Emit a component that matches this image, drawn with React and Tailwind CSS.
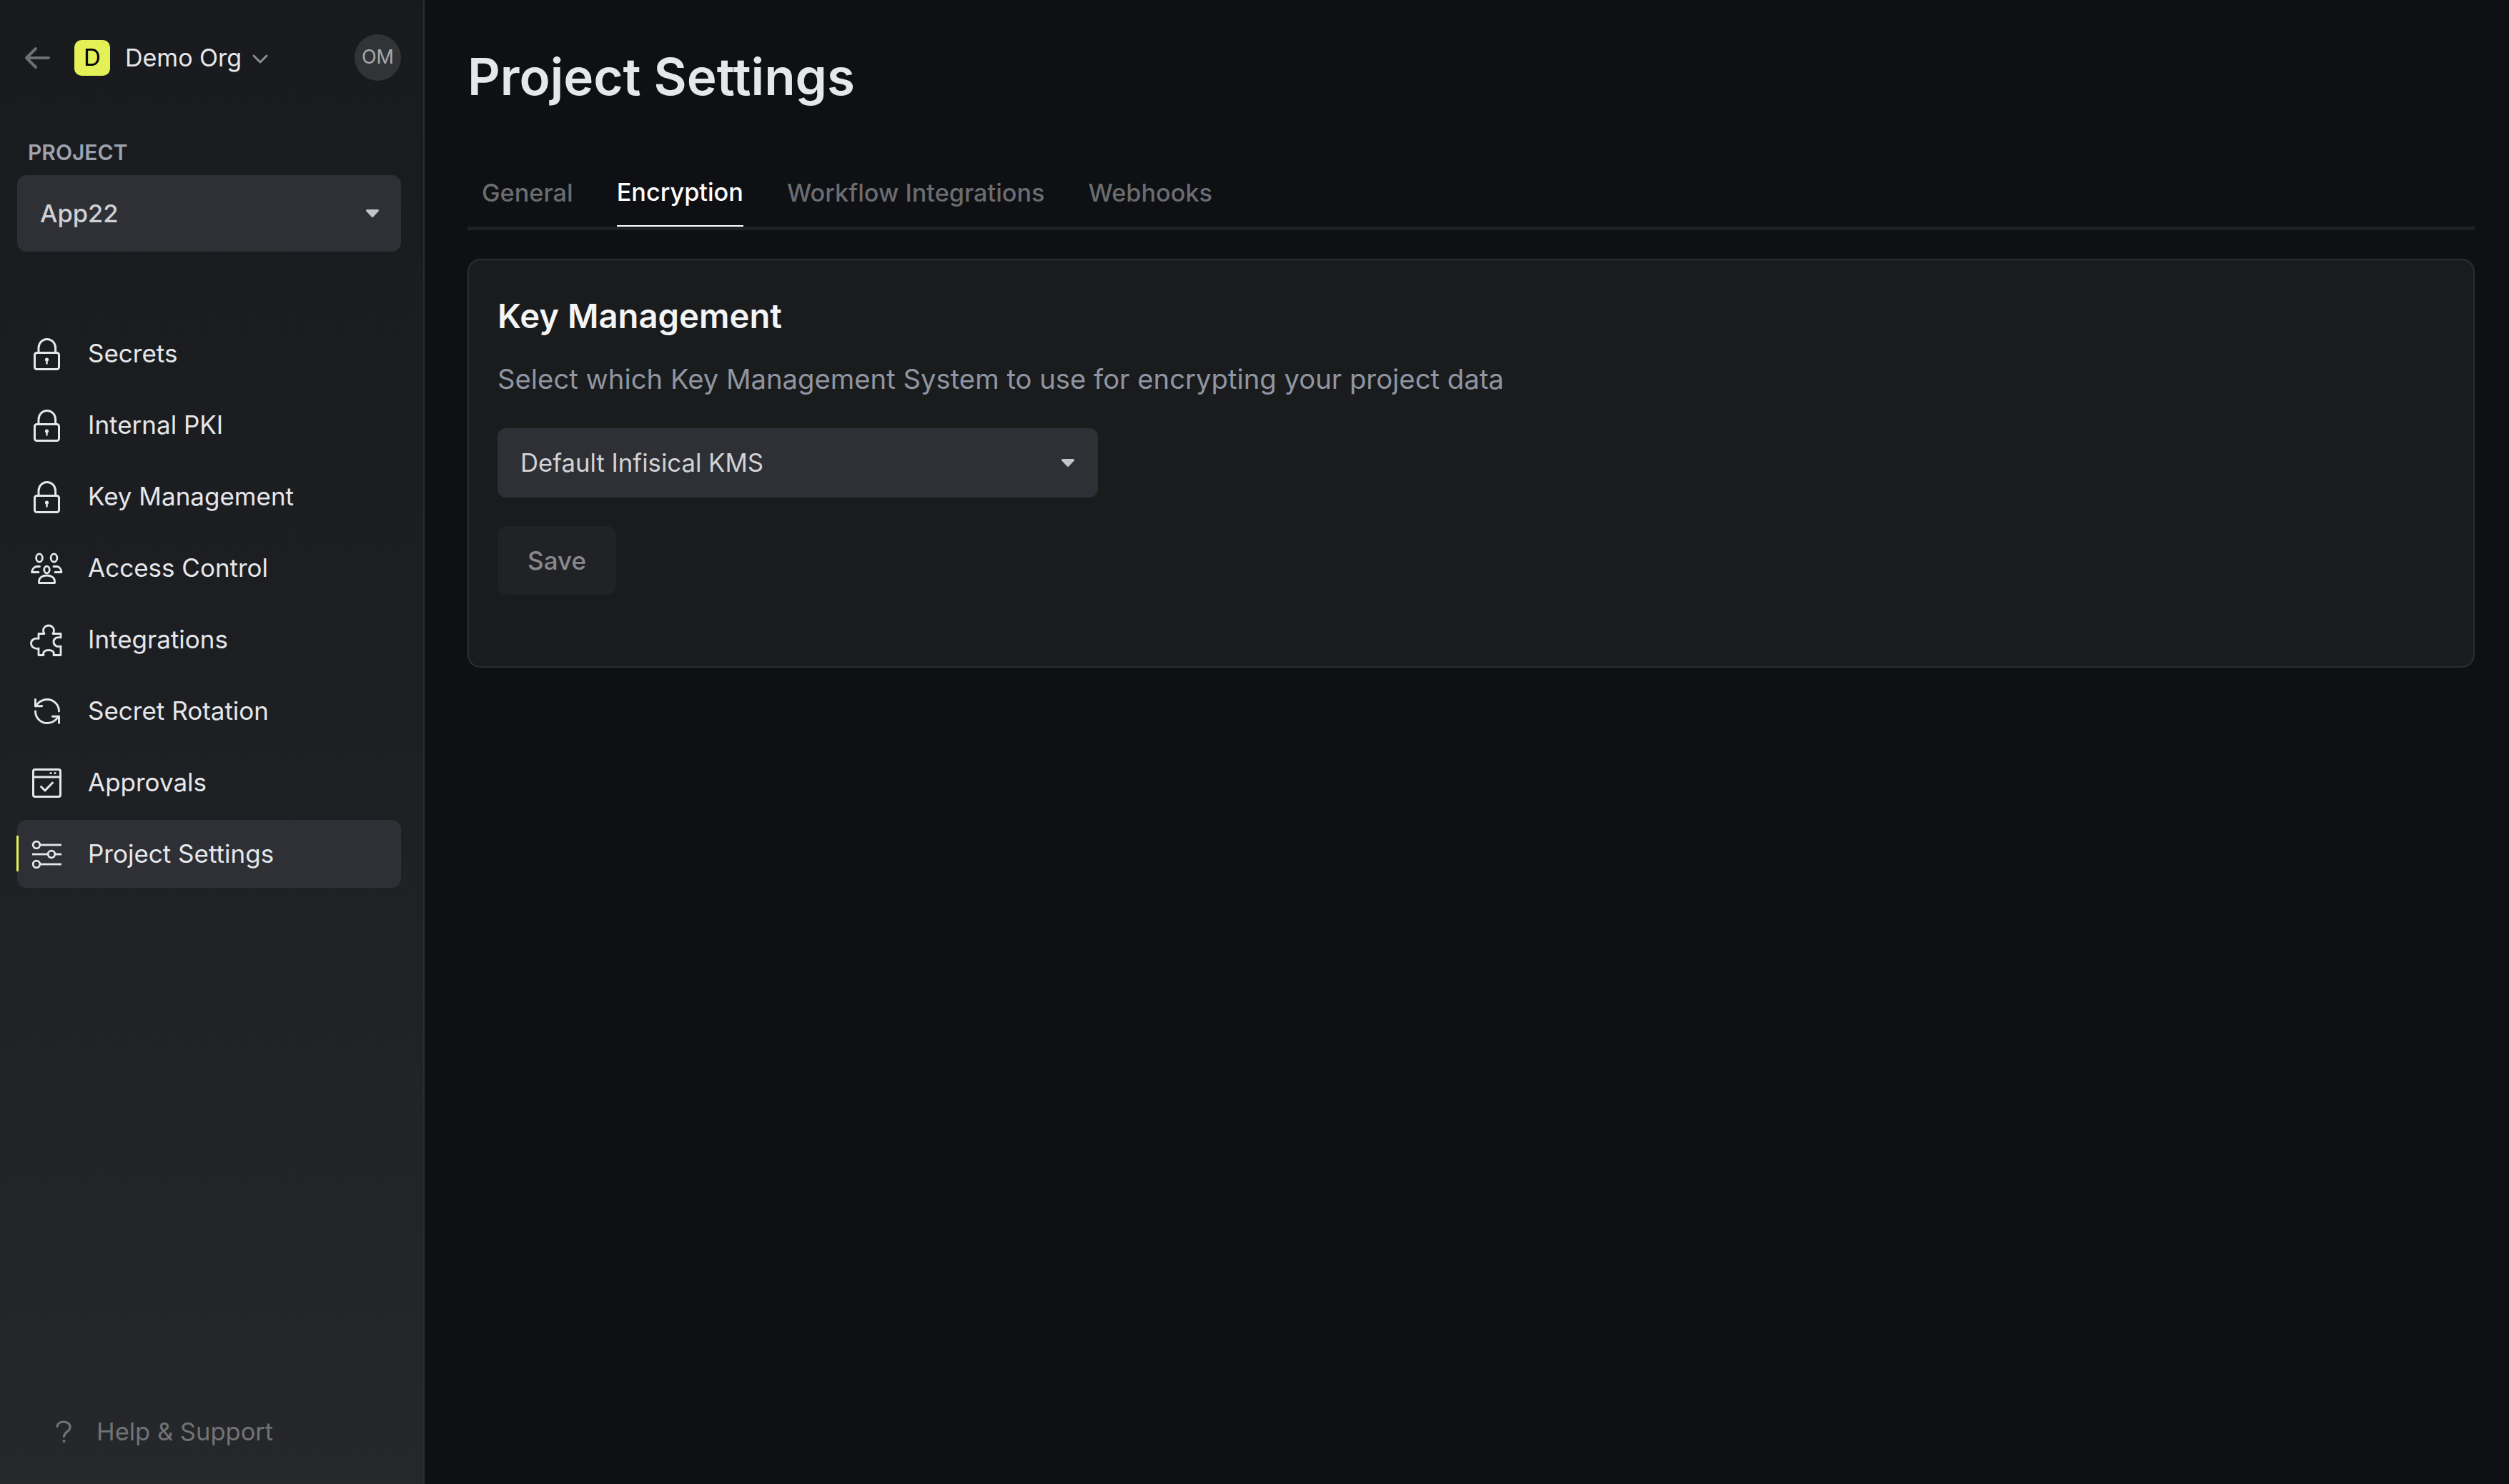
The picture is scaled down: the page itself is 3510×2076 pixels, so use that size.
import { RefreshCcw } from 'lucide-react'

function LockIcon() {
  return (
    <svg width="48" height="48" viewBox="0 0 48 48" fill="none" stroke="currentColor" strokeWidth="3">
      <path d="M12 22V15.5a11.8 12 0 0 1 23.6 0V22" />
      <rect x="6.5" y="22.5" width="34" height="23" rx="3" />
      <circle cx="23.5" cy="32" r="2.6" fill="currentColor" stroke="none" />
      <path d="M23.5 33v4.5" strokeWidth="2.4" strokeLinecap="round" />
    </svg>
  )
}

function PeopleIcon() {
  return (
    <svg width="48" height="48" viewBox="0 0 48 48" fill="none" stroke="currentColor" strokeWidth="2.8" strokeLinecap="round" strokeLinejoin="round">
      <ellipse cx="13" cy="9.5" rx="4.4" ry="5.6" />
      <ellipse cx="33.5" cy="9.5" rx="4.4" ry="5.6" />
      <ellipse cx="23.5" cy="26" rx="3.8" ry="4.8" />
      <path d="M13.5 21.5H9.5C6 21.5 3 25 2.5 29.5H12" />
      <path d="M33 21.5h4.5c3.5 0 6 3.5 6.500 8H35" />
      <path d="M12.500 44.500V42c0-4.800 5-8 11-8s11 3.200 11 8v2.500Z" />
    </svg>
  )
}

function PuzzleIcon() {
  return (
    <svg width="48" height="48" viewBox="0 0 48 48" fill="none" stroke="currentColor" strokeWidth="2.800" strokeLinejoin="round">
      <path d="M12 15.500H20C19 14 18.500 12.500 18.500 11C18.500 7 22 4 26 4C30 4 33.500 7 33.500 11C33.500 12.500 33 14 32 15.500H43V21C38 19.500 33 22 33 27C33 32 38 34.500 43 33V45.500H33C34.500 41 31 38.500 26 38.500C21 38.500 17.500 41 19 45.500H12V36C7 37.500 1.500 34 1.500 29C1.500 24 7 21 12 22.500Z" />
    </svg>
  )
}

function ApprovalIcon() {
  return (
    <svg width="48" height="48" viewBox="0 0 48 48" fill="none" stroke="currentColor" strokeWidth="3" strokeLinecap="round" strokeLinejoin="round">
      <rect x="4.500" y="5.500" width="38" height="38" rx="2.500" />
      <path d="M4.500 16H42.500" />
      <circle cx="29" cy="10.500" r="1.500" fill="currentColor" stroke="none" />
      <circle cx="35" cy="10.500" r="1.500" fill="currentColor" stroke="none" />
      <path d="M15.500 29.500l5.500 5.500 10.500-11" />
    </svg>
  )
}

function SlidersIcon() {
  return (
    <svg width="48" height="48" viewBox="0 0 48 48" fill="none" stroke="currentColor" strokeWidth="2.800">
      <circle cx="9" cy="11" r="4.800" />
      <path d="M14 11H44" />
      <path d="M3 24H25" />
      <circle cx="30" cy="24" r="4.800" />
      <path d="M35 24H44" />
      <circle cx="9" cy="38" r="4.800" />
      <path d="M14 38H44" />
    </svg>
  )
}

function Caret({ className }) {
  return (
    <svg width="20" height="13" viewBox="0 0 20 13" className={className}>
      <path d="M2.500 2.500H17.500L10 10.500Z" fill="currentColor" stroke="currentColor" strokeWidth="3" strokeLinejoin="round" />
    </svg>
  )
}

const navItems = [
  { label: 'Secrets', icon: <LockIcon /> },
  { label: 'Internal PKI', icon: <LockIcon /> },
  { label: 'Key Management', icon: <LockIcon /> },
  { label: 'Access Control', icon: <PeopleIcon /> },
  { label: 'Integrations', icon: <PuzzleIcon /> },
  { label: 'Secret Rotation', icon: <RefreshCcw size={44} strokeWidth={1.6} /> },
  { label: 'Approvals', icon: <ApprovalIcon /> },
  { label: 'Project Settings', icon: <SlidersIcon />, active: true },
]

const tabs = ['General', 'Encryption', 'Workflow Integrations', 'Webhooks']

export default function App() {
  return (
    <div className="flex h-screen w-screen overflow-hidden bg-[#0e1014] font-[family-name:Inter,sans-serif]">
      {/* sidebar */}
      <aside className="flex h-full w-[594px] shrink-0 flex-col border-r-2 border-[#2b2c30] bg-linear-to-t from-[#26272b] via-[#1e1f22] via-50% to-[#191a1d]">
        <div className="flex h-[65px] items-center justify-between mt-[48px] pl-[34px] pr-[31px]">
          <div className="flex items-center">
            <svg width="36" height="32" viewBox="0 0 36 32" fill="none" stroke="#6f7072" strokeWidth="4" strokeLinecap="round" strokeLinejoin="round">
              <path d="M34 16H3M16 3L3 16L16 29" />
            </svg>
            <div className="ml-[34px] flex h-[50px] w-[50px] items-center justify-center rounded-[10px] bg-[#e3f157] text-[33px] text-black">
              D
            </div>
            <span className="ml-[21px] text-[34px] text-[#e5e7eb]">Demo Org</span>
            <svg className="ml-[15px] mt-[4px]" width="22" height="13" viewBox="0 0 22 13" fill="none" stroke="#8c8d90" strokeWidth="3" strokeLinecap="round" strokeLinejoin="round">
              <path d="M2 2L11 11L20 2" />
            </svg>
          </div>
          <div className="flex h-[65px] w-[65px] items-center justify-center rounded-full bg-[#323337] text-[27px] text-[#a8a9ac]">
            OM
          </div>
        </div>

        <div className="ml-[39px] mt-[84px] text-[30px] leading-[32px] font-semibold text-[#9ca3af]">PROJECT</div>
        <div className="ml-[24px] mr-[31px] mt-[16px] flex h-[107px] items-center justify-between rounded-[13px] bg-[#2e3035] pl-[32px] pr-[30px]">
          <span className="text-[34.5px] font-medium text-[#cfd1d5]">App22</span>
          <Caret className="text-[#c4c5c8]" />
        </div>

        <nav className="ml-[24px] mr-[31px] mt-[95px] flex flex-col gap-[5px]">
          {navItems.map((item) => (
            <div
              key={item.label}
              className={`relative flex h-[95px] items-center rounded-[13px] pl-[18px] text-[35px] text-[#e5e7eb] ${item.active ? 'bg-[#2e3035]' : ''}`}
            >
              {item.active && <div className="absolute left-[-1px] top-[22px] h-[50px] w-[3px] bg-[#e3f157]" />}
              <span className="flex w-[48px] items-center justify-center">{item.icon}</span>
              <span className="ml-[33px]">{item.label}</span>
            </div>
          ))}
        </nav>

        <div className="mt-auto mb-[51px] ml-[78px] flex h-[44px] items-center text-[34.5px] text-[#727376]">
          <svg width="22" height="32" viewBox="0 0 22 32" fill="none" stroke="currentColor" strokeWidth="3.200" strokeLinecap="round">
            <path d="M2 8.500C2.500 4.500 6 2 11 2c5 0 9 3 9 7.500 0 6-8 6.500-8.500 13" />
            <circle cx="11.500" cy="29" r="2" fill="currentColor" stroke="none" />
          </svg>
          <span className="ml-[35px]">Help & Support</span>
        </div>
      </aside>

      {/* main */}
      <main className="flex-1 pl-[60px] pr-[48px]">
        <h1 className="mt-[67px] text-[71px] leading-[80px] font-semibold text-[#e5e7eb]">Project Settings</h1>

        <div className="mt-[76px] flex gap-[61px] border-b-[5px] border-[#1f2125] pl-[20px]">
          {tabs.map((tab) => (
            <div
              key={tab}
              className={`flex h-[94px] items-center text-[34.25px] font-medium ${tab === 'Encryption' ? 'border-b-2 border-white text-white' : 'text-[#6b6c70]'}`}
            >
              {tab}
            </div>
          ))}
        </div>

        <section className="mt-[40px] h-[572px] rounded-[18px] border-2 border-[#2d2e32] bg-[#1a1b1d] px-[40px] pt-[48px]">
          <h2 className="text-[47.2px] leading-[60px] font-semibold text-[#f3f4f6]">Key Management</h2>
          <p className="mt-[32px] text-[38.25px] leading-[52px] text-[#8f95a1]">
            Select which Key Management System to use for encrypting your project data
          </p>
          <div className="mt-[43px] flex h-[97px] w-[840px] items-center justify-between rounded-[12px] bg-[#2e3035] pl-[32px] pr-[32px]">
            <span className="text-[34.7px] text-[#d1d3d6]">Default Infisical KMS</span>
            <Caret className="text-[#c4c5c8]" />
          </div>
          <button className="mt-[40px] block h-[96px] w-[166px] rounded-[12px] bg-[#212226] text-[35px] font-medium text-[#88898c]">
            Save
          </button>
        </section>
      </main>
    </div>
  )
}
